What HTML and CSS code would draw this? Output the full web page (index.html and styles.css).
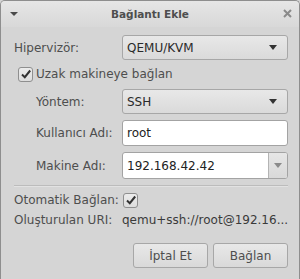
FILE: index.html
```html
<!DOCTYPE html>
<html>
<head>
<meta charset="utf-8">
<link rel="stylesheet" href="styles.css">
</head>
<body>
<div class="window">
  <div class="titlebar">
    <span class="menu-arrow"></span>
    <span class="title">Bağlantı Ekle</span>
    <svg class="close" width="9" height="9" viewBox="0 0 9 9"><path d="M1 1L8 8M8 1L1 8" stroke="#8a8a8a" stroke-width="2"/></svg>
  </div>
  <div class="content">
    <div class="row r-hyp">
      <span class="label">Hipervizör:</span>
      <div class="combo"><span class="val">QEMU/KVM</span><span class="arrow"></span></div>
    </div>
    <div class="row r-check">
      <span class="check on"><svg width="12" height="12" viewBox="0 0 12 12"><path d="M2 6.5L4.8 9.2L10.2 2.5" fill="none" stroke="#333" stroke-width="2"/></svg></span>
      <span class="label dark">Uzak makineye bağlan</span>
    </div>
    <div class="row r-yon sub">
      <span class="label">Yöntem:</span>
      <div class="combo"><span class="val">SSH</span><span class="arrow"></span></div>
    </div>
    <div class="row r-kul sub">
      <span class="label">Kullanıcı Adı:</span>
      <div class="entry"><span class="val">root</span></div>
    </div>
    <div class="row r-mak sub">
      <span class="label">Makine Adı:</span>
      <div class="entry combo-entry"><span class="val">192.168.42.42</span><span class="ebtn"><span class="arrow light"></span></span></div>
    </div>
    <div class="sep"></div>
    <div class="row r-oto">
      <span class="label">Otomatik Bağlan:</span>
      <span class="check on small"><svg width="12" height="12" viewBox="0 0 12 12"><path d="M2 6.5L4.8 9.2L10.2 2.5" fill="none" stroke="#333" stroke-width="2"/></svg></span>
    </div>
    <div class="row r-uri">
      <span class="label">Oluşturulan URI:</span>
      <span class="uri">qemu+ssh://root@192.16...</span>
    </div>
    <div class="buttons">
      <button class="btn">İptal Et</button>
      <button class="btn">Bağlan</button>
    </div>
  </div>
</div>
</body>
</html>
```
FILE: styles.css
```css
html, body {
  margin: 0;
  padding: 0;
  background: #d4d4d4;
}
body {
  font-family: "DejaVu Sans", sans-serif;
  font-size: 12px;
  color: #4e4e4e;
  width: 300px;
  height: 279px;
  overflow: hidden;
}
.window {
  box-sizing: border-box;
  width: 300px;
  height: 279px;
  border: 1px solid #8e8e8e;
  border-bottom: none;
  border-radius: 5px 5px 0 0;
  background: #d5d5d5;
  overflow: hidden;
}
.titlebar {
  height: 26px;
  display: flex;
  align-items: center;
  justify-content: center;
  position: relative;
  background: linear-gradient(#e6e6e6, #d8d8d8);
}
.title {
  font-weight: bold;
  font-size: 10.5px;
  color: #4e4e4e;
}
.menu-arrow {
  position: absolute;
  left: 9px;
  top: 11px;
  width: 0;
  height: 0;
  border-left: 4px solid transparent;
  border-right: 4px solid transparent;
  border-top: 4px solid #4a4a4a;
}
.close {
  position: absolute;
  right: 7px;
  top: 8px;
}
.content {
  display: flex;
  flex-direction: column;
  padding: 0 11px 0 13px;
}
.row {
  display: flex;
  align-items: center;
}
.label {
  width: 108px;
  flex: none;
  white-space: nowrap;
}
.sub .label {
  padding-left: 22px;
  width: 86px;
}
.r-hyp { margin-top: 8px; height: 25px; }
.r-check { margin-top: 6px; height: 16px; padding-left: 4px; }
.r-yon { margin-top: 7px; height: 25px; }
.r-kul { margin-top: 6px; height: 26px; }
.r-mak { margin-top: 6px; height: 27px; }
.r-oto { margin-top: 5px; height: 16px; }
.r-uri { margin-top: 4px; height: 16px; }
.combo, .entry {
  box-sizing: border-box;
  flex: 1;
  height: 100%;
  display: flex;
  align-items: center;
  border-radius: 3px;
}
.combo {
  border: 1px solid #a7a7a7;
  background: linear-gradient(#e8e8e8, #dadada);
  padding-left: 4px;
  padding-right: 10px;
  color: #2a2a2a;
}
.combo .val { flex: 1; }
.arrow {
  width: 0;
  height: 0;
  border-left: 4px solid transparent;
  border-right: 4px solid transparent;
  border-top: 5px solid #333;
}
.arrow.light { border-top-color: #8a8a8a; }
.entry {
  border: 1px solid #a3a3a3;
  background: #fff;
  padding-left: 4px;
  color: #222;
}
.entry .val { flex: 1; }
.combo-entry { padding-right: 0; }
.ebtn {
  box-sizing: border-box;
  width: 19px;
  height: 100%;
  border-left: 1px solid #b4b4b4;
  background: linear-gradient(#e6e6e6, #d9d9d9);
  border-radius: 0 2px 2px 0;
  display: flex;
  align-items: center;
  justify-content: center;
}
.check {
  box-sizing: border-box;
  width: 15px;
  height: 15px;
  border: 1px solid #8f8f8f;
  border-radius: 3px;
  background: linear-gradient(#ececec, #dddddd);
  display: flex;
  align-items: center;
  justify-content: center;
  margin-right: 3px;
  flex: none;
}
.check.small { margin: 0 0 0 1px; }
.label.dark { color: #4e4e4e; }
.sep {
  margin-top: 6px;
  height: 1px;
  background: #bcbcbc;
  border-bottom: 1px solid #e2e2e2;
}
.uri { color: #3a3a3a; white-space: nowrap; }
.buttons {
  margin-top: 15px;
  display: flex;
  justify-content: flex-end;
  gap: 5px;
}
.btn {
  box-sizing: border-box;
  width: 75px;
  height: 25px;
  border: 1px solid #a7a7a7;
  border-radius: 3px;
  background: linear-gradient(#e8e8e8, #d9d9d9);
  font-family: "DejaVu Sans", sans-serif;
  font-size: 12px;
  color: #4e4e4e;
  padding: 0;
}
```
